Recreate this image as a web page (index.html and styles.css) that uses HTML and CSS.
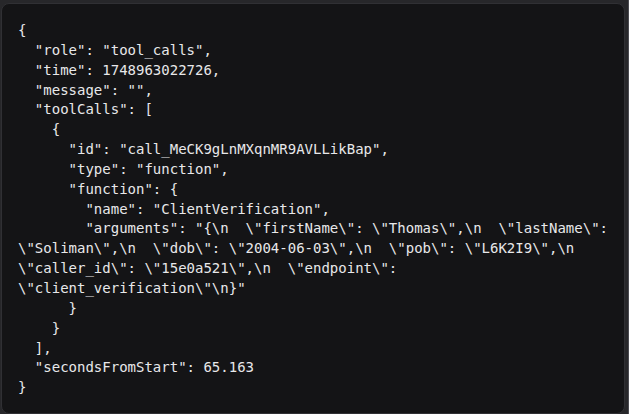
FILE: index.html
```html
<!DOCTYPE html>
<html>
<head>
<meta charset="utf-8">
<link rel="stylesheet" href="styles.css">
</head>
<body>
<div class="frame">
<pre class="code">{
  "role": "tool_calls",
  "time": 1748963022726,
  "message": "",
  "toolCalls": [
    {
      "id": "call_MeCK9gLnMXqnMR9AVLLikBap",
      "type": "function",
      "function": {
        "name": "ClientVerification",
        "arguments": "{\n  \"firstName\": \"Thomas\",\n  \"lastName\": \"Soliman\",\n  \"dob\": \"2004-06-03\",\n  \"pob\": \"L6K2I9\",\n  \"caller_id\": \"15e0a521\",\n  \"endpoint\": \"client_verification\"\n}"
      }
    }
  ],
  "secondsFromStart": 65.163
}</pre>
</div>
</body>
</html>
```
FILE: styles.css
```css
html, body {
  margin: 0;
  padding: 0;
  background: #27272a;
  height: 100%;
}
body {
  padding: 3px 3px 0 1px;
  box-sizing: border-box;
  border-right: 1px solid #4a4a50;
}
.frame {
  height: 100%;
  box-sizing: border-box;
  background: #141416;
  border: 1px solid #303034;
  border-radius: 8px;
}
.code {
  margin: 0;
  padding: 17px 12px 16px 16px;
  font-family: "DejaVu Sans Mono", monospace;
  font-size: 14px;
  line-height: 19.85px;
  color: #e8e8ea;
  white-space: pre-wrap;
}
```
